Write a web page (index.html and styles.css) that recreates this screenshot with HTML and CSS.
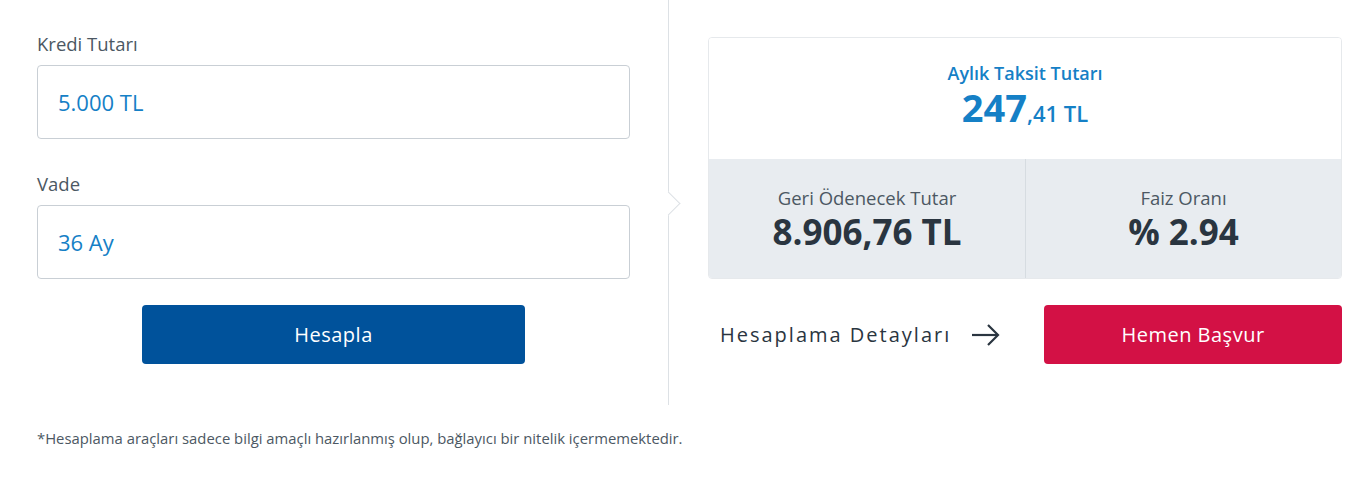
FILE: index.html
```html
<!DOCTYPE html>
<html lang="tr">
<head>
<meta charset="utf-8">
<title>Kredi Hesaplama</title>
<link rel="stylesheet" href="styles.css">
</head>
<body>
<div class="calc">
  <div class="calc-main">
    <section class="form-col">
      <div class="field">
        <label class="field-label">Kredi Tutarı</label>
        <div class="field-box">5.000 TL</div>
      </div>
      <div class="field field-second">
        <label class="field-label">Vade</label>
        <div class="field-box">36 Ay</div>
      </div>
      <div class="btn-row">
        <button class="btn btn-blue">Hesapla</button>
      </div>
    </section>
    <div class="divider"><span class="divider-notch"></span></div>
    <section class="result-col">
      <div class="result-card">
        <div class="result-top">
          <div class="result-title">Aylık Taksit Tutarı</div>
          <div class="result-amount"><span class="amount-int">247</span><span class="amount-dec">,41 TL</span></div>
        </div>
        <div class="result-bottom">
          <div class="result-cell">
            <div class="cell-label">Geri Ödenecek Tutar</div>
            <div class="cell-value">8.906,76 TL</div>
          </div>
          <div class="result-cell">
            <div class="cell-label">Faiz Oranı</div>
            <div class="cell-value">% 2.94</div>
          </div>
        </div>
      </div>
      <div class="action-row">
        <a class="detail-link">Hesaplama Detayları
          <svg class="detail-arrow" width="30" height="24" viewBox="0 0 30 24" fill="none" stroke="#2a3540" stroke-width="2.2" stroke-linecap="butt" stroke-linejoin="miter"><path d="M1 12 H27"/><path d="M17 2 L27 12 L17 22"/></svg>
        </a>
        <button class="btn btn-red">Hemen Başvur</button>
      </div>
    </section>
  </div>
  <p class="footnote">*Hesaplama araçları sadece bilgi amaçlı hazırlanmış olup, bağlayıcı bir nitelik içermemektedir.</p>
</div>
</body>
</html>
```
FILE: styles.css
```css
* { box-sizing: border-box; }
html, body { margin: 0; padding: 0; background: #ffffff; }
body {
  font-family: "Open Sans", "Noto Sans", "DejaVu Sans", sans-serif;
  color: #4c5863;
  width: 1359px;
  height: 492px;
  overflow: hidden;
}
.calc { padding: 0 17px 0 37px; }
.calc-main {
  display: flex;
  align-items: stretch;
  height: 405px;
}
.form-col {
  width: 593px;
  padding-top: 32px;
  display: flex;
  flex-direction: column;
}
.field { display: flex; flex-direction: column; }
.field-second { margin-top: 33px; }
.field-label {
  font-size: 18.5px;
  line-height: 24px;
  color: #4c5863;
  margin-bottom: 9px;
}
.field-box {
  height: 74px;
  border: 1px solid #c9cfd5;
  border-radius: 4px;
  padding-left: 20px;
  display: flex;
  align-items: center;
  font-size: 22px;
  line-height: 30px;
  color: #1580c6;
}
.btn-row {
  display: flex;
  justify-content: center;
  margin-top: 26px;
}
.btn {
  font-family: inherit;
  border: 0;
  border-radius: 4px;
  color: #ffffff;
  font-size: 20px;
  letter-spacing: 0.5px;
  height: 59px;
  cursor: pointer;
}
.btn-blue { width: 383px; background: #00529b; }
.btn-red { width: 298px; background: #d31145; margin-left: auto; }

.divider {
  position: relative;
  width: 1px;
  background: #dde1e5;
  margin-left: 38px;
  margin-right: 39px;
}
.divider-notch {
  position: absolute;
  left: -8px;
  top: 195px;
  width: 17px;
  height: 17px;
  background: #ffffff;
  border-top: 1px solid #dde1e5;
  border-right: 1px solid #dde1e5;
  transform: rotate(45deg);
}

.result-col {
  flex: 1;
  padding-top: 37px;
  display: flex;
  flex-direction: column;
}
.result-card {
  border: 1px solid #e6e9ec;
  border-radius: 4px;
  overflow: hidden;
}
.result-top {
  height: 121px;
  padding-top: 23px;
  text-align: center;
  background: #ffffff;
}
.result-title {
  font-size: 18px;
  line-height: 24px;
  font-weight: 600;
  color: #1580c6;
}
.result-amount {
  margin-top: 2px;
  line-height: 40px;
  color: #1580c6;
  font-weight: 600;
}
.amount-int { font-size: 38px; font-weight: 700; }
.amount-dec { font-size: 22px; }
.result-bottom {
  display: grid;
  grid-template-columns: 1fr 1fr;
  background: #e8ecf0;
  height: 119px;
}
.result-cell {
  padding-top: 27px;
  text-align: center;
}
.result-cell + .result-cell { border-left: 1px solid #d6dce1; }
.cell-label {
  font-size: 18.5px;
  line-height: 24px;
  color: #4c5863;
}
.cell-value {
  margin-top: 2px;
  font-size: 35px;
  line-height: 40px;
  font-weight: 700;
  color: #2a3540;
}
.action-row {
  display: flex;
  align-items: center;
  margin-top: 26px;
}
.detail-link {
  display: flex;
  align-items: center;
  gap: 20px;
  padding-left: 12px;
  font-size: 20px;
  letter-spacing: 2px;
  color: #2a3540;
}
.footnote {
  margin: 23px 0 0 0;
  font-size: 14.85px;
  line-height: 20px;
  color: #4c5863;
}
```
